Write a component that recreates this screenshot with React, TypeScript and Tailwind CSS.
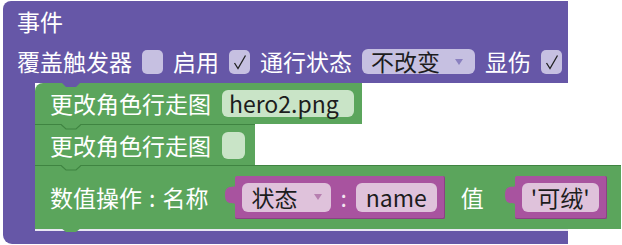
import type { ReactNode } from "react";

const PURPLE = "bg-[#6657a7]";
const GREEN = "bg-[#5ba55c]";

function Check() {
  return (
    <div className="flex h-[24px] w-[21px] items-center justify-center rounded-[5px] bg-[#c6c0e1]">
      <svg width="14" height="16" viewBox="0 0 14 16">
        <path d="M1.5 9 L5 14.5 L12.5 1.5" fill="none" stroke="#222" strokeWidth="1.3" />
      </svg>
    </div>
  );
}

function Tri({ color }: { color: string }) {
  return (
    <svg width="8" height="6" viewBox="0 0 8 6">
      <path d="M0 0 L8 0 L4 6 Z" fill={color} />
    </svg>
  );
}

function GreenField({ children, className = "" }: { children?: ReactNode; className?: string }) {
  return (
    <div
      className={`flex h-[27px] items-center rounded-[6px] bg-[#c9e4c7] px-[7px] text-[#1d1d1d] ${className}`}
    >
      {children}
    </div>
  );
}

function PinkField({ children }: { children: ReactNode }) {
  return (
    <div className="flex h-[29px] items-center rounded-[6px] bg-[#dfc2db] px-[9px] text-[#1d1d1d]">
      {children}
    </div>
  );
}

// top notch of a statement block; fill is the colour of the tab above it
function Notch({ fill, line }: { fill: string; line?: string }) {
  return (
    <svg className="absolute left-[26px] top-[-1px]" width="20" height="6" viewBox="0 0 20 6">
      <path d="M0 0 L5 5 L15 5 L20 0 Z" fill={fill} />
      {line && <path d="M0 0.5 L5 5 L15 5 L20 0.5" fill="none" stroke={line} strokeWidth="1.2" />}
    </svg>
  );
}

function OutputTab() {
  return (
    <svg className="absolute left-[-12px] top-[8px]" width="13" height="22" viewBox="0 0 13 22">
      <path d="M13 0 C13 6 2 -2 2 11 C2 24 13 16 13 22 Z" fill="#a8539f" />
    </svg>
  );
}

function ValueBlock({ children }: { children: ReactNode }) {
  return (
    <div className="relative flex h-[43px] items-center rounded-[2px] border-b border-r border-[#8a4283] bg-[#a8539f] px-[7px]">
      <OutputTab />
      {children}
    </div>
  );
}

export default function App() {
  return (
    <div
      className="h-[245px] w-[622px] overflow-hidden bg-white pl-[3px] pt-[1px] text-[23px] leading-none text-white"
      style={{ fontFamily: '"Noto Sans CJK SC", "Noto Sans", sans-serif' }}
    >
      {/* event header */}
      <div className={`w-[565px] rounded-tl-[8px] ${PURPLE} pl-[14px] pt-[7px]`}>
        <div className="flex h-[26px] items-center">事件</div>
        <div className="mt-[15px] flex h-[25px] items-center gap-[10px]">
          <span>覆盖触发器</span>
          <div className="h-[24px] w-[21px] rounded-[5px] bg-[#c6c0e1]" />
          <span>启用</span>
          <Check />
          <span>通行状态</span>
          <div className="flex h-[25px] w-[113px] items-center rounded-[6px] bg-[#c6c0e1] pl-[9px] text-[#1d1d1d]">
            <span>不改变</span>
            <span className="ml-[15px] flex">
              <Tri color="#8a80c0" />
            </span>
          </div>
          <span>显伤</span>
          <Check />
        </div>
        <div className="h-[9px]" />
      </div>

      {/* statements */}
      <div className="flex">
        <div className={`w-[32px] ${PURPLE}`} />
        <div className="flex flex-col items-start">
          <div className={`relative flex h-[41px] w-[327px] items-center gap-[11px] rounded-tl-[8px] ${GREEN} pl-[15px]`}>
            <Notch fill="#6657a7" />
            <span>更改角色行走图</span>
            <GreenField className="w-[132px]">hero2.png</GreenField>
          </div>
          <div className={`relative flex h-[41px] w-[220px] items-center gap-[11px] border-t border-[#3f8441] ${GREEN} pl-[15px]`}>
            <Notch fill="#5ba55c" line="#3f8441" />
            <span>更改角色行走图</span>
            <GreenField className="w-[23px]" />
          </div>
          <div className={`relative flex h-[64px] w-[586px] items-center border-t border-[#3f8441] ${GREEN} pl-[15px]`}>
            <Notch fill="#5ba55c" line="#3f8441" />
            <span>数值操作</span>
            <span className="mx-[7px]">:</span>
            <span>名称</span>
            <div className="ml-[27px]">
              <ValueBlock>
                <PinkField>
                  <span>状态</span>
                  <span className="ml-[17px] flex">
                    <Tri color="#b77fb0" />
                  </span>
                </PinkField>
                <span className="mx-[9px] text-[#f3e6f1]">:</span>
                <PinkField>
                  <span className="px-[1px]">name</span>
                </PinkField>
              </ValueBlock>
            </div>
            <span className="ml-[16px]">值</span>
            <div className="ml-[31px]">
              <ValueBlock>
                <PinkField>
                  <span>'可绒'</span>
                </PinkField>
              </ValueBlock>
            </div>
            <svg className="absolute bottom-[-4px] left-[26px]" width="20" height="5" viewBox="0 0 20 5">
              <path d="M0 0 L5 4 L15 4 L20 0 Z" fill="#5ba55c" />
            </svg>
          </div>
        </div>
      </div>

      {/* bottom arm */}
      <div className={`h-[15px] w-[565px] rounded-bl-[9px] ${PURPLE}`}>
        <div className="ml-[32px] h-[2px] bg-[#e9e7f4]" />
      </div>
    </div>
  );
}
